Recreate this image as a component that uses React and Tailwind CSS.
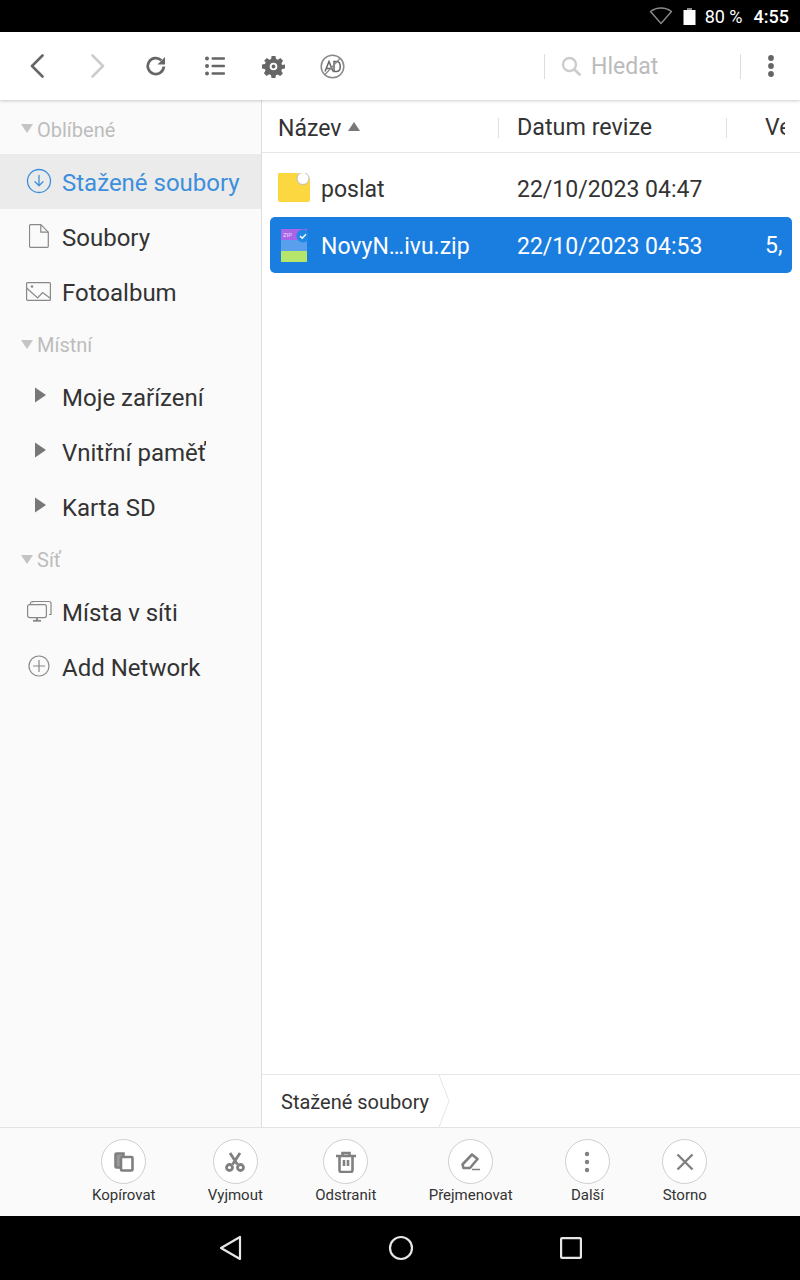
import React from 'react';

function Wifi() {
    return (
        <svg width="24" height="18" viewBox="0 0 24 18" fill="none">
            <path d="M1.500 4.500C4.500 2.200 8 1 12 1s7.500 1.200 10.500 3.500L12 16.500z" stroke="#8a8a8a" strokeWidth="1.400" strokeLinejoin="round" />
        </svg>
    );
}

function Battery() {
    return (
        <svg width="13" height="17" viewBox="0 0 13 17">
            <rect x="4" y="0" width="5" height="2" fill="#8a8a8a" />
            <rect x="0.500" y="2" width="12" height="15" fill="#fff" />
        </svg>
    );
}

function ToolIcon({ children }) {
    return <div className="w-[59px] flex items-center justify-center">{children}</div>;
}

function Toolbar() {
    return (
        <div className="h-[68px] bg-white flex items-center pl-[8px] shadow-[0_1px_3px_rgba(0,0,0,0.2)] relative z-10">
            <ToolIcon>
                <svg width="16" height="24" viewBox="0 0 16 24" fill="none" className="-ml-[2px]"><path d="M13.500 1.500 3 12l10.500 10.500" stroke="#666" strokeWidth="2.600" strokeLinecap="round" strokeLinejoin="round" /></svg>
            </ToolIcon>
            <ToolIcon>
                <svg width="16" height="24" viewBox="0 0 16 24" fill="none" className="ml-[2px]"><path d="M2.500 1.500 13 12 2.500 22.500" stroke="#ccc" strokeWidth="2.600" strokeLinecap="round" strokeLinejoin="round" /></svg>
            </ToolIcon>
            <ToolIcon>
                <svg width="22" height="22" viewBox="0 0 22 22" fill="none">
                    <path d="M18.800 11.500a8 8 0 1 1-2.500-6.200" stroke="#666" strokeWidth="2.700" />
                    <path d="M20 2v7.500h-7.500z" fill="#666" />
                </svg>
            </ToolIcon>
            <ToolIcon>
                <svg width="20" height="20" viewBox="0 0 20 20" fill="#666">
                    <circle cx="2" cy="2.500" r="2" /><circle cx="2" cy="10" r="2" /><circle cx="2" cy="17.500" r="2" />
                    <rect x="6.500" y="1.300" width="13.500" height="2.400" rx="1" /><rect x="6.500" y="8.800" width="13.500" height="2.400" rx="1" /><rect x="6.500" y="16.300" width="13.500" height="2.400" rx="1" />
                </svg>
            </ToolIcon>
            <ToolIcon>
                <svg width="23" height="23" viewBox="0 0 24 24" fill="#666">
                    <path fillRule="evenodd" d="M10 1h4l.7 3.100 1.800.8L19.200 3.200l2.800 2.800-1.700 2.700.8 1.800L24 10v4l-3.100.7-.8 1.800 1.700 2.700-2.800 2.800-2.700-1.700-1.800.8L14 24h-4l-.7-3.100-1.800-.8-2.700 1.700L2 19l1.700-2.700-.8-1.800L0 14v-4l3.100-.7.8-1.800L2.200 6 5 3.200l2.700 1.700 1.800-.8zM12 8a4 4 0 1 0 0 8 4 4 0 0 0 0-8z" />
                    <circle cx="12" cy="12" r="2" />
                </svg>
            </ToolIcon>
            <ToolIcon>
                <svg width="25" height="25" viewBox="0 0 25 25" fill="none">
                    <circle cx="12.500" cy="12.500" r="11.300" stroke="#888" strokeWidth="1.500" />
                    <path d="M5 17.500 9 7.500l4 10M6.500 14.500h5" stroke="#666" strokeWidth="1.500" />
                    <path d="M14 7.500v10h2.500c5 0 5-10 0-10z" stroke="#666" strokeWidth="1.500" />
                    <path d="M4.500 21 20.500 4" stroke="#888" strokeWidth="1.200" />
                </svg>
            </ToolIcon>
            <div className="ml-auto flex items-center">
                <div className="w-px h-[25px] bg-[#ddd]" />
                <div className="w-[195px] flex items-center pl-[16px] gap-[10px]">
                    <svg width="20" height="20" viewBox="0 0 20 20" fill="none">
                        <circle cx="8.500" cy="8.500" r="6.500" stroke="#ccc" strokeWidth="2.400" />
                        <path d="m13.500 13.500 5 5" stroke="#ccc" strokeWidth="2.800" strokeLinecap="round" />
                    </svg>
                    <span className="text-[23px] text-[#bbb] leading-none mt-[1px]">Hledat</span>
                </div>
                <div className="w-px h-[25px] bg-[#ddd]" />
                <div className="w-[59px] flex justify-center">
                    <svg width="8" height="24" viewBox="0 0 8 24" fill="#666"><circle cx="4" cy="4" r="2.900" /><circle cx="4" cy="12" r="2.900" /><circle cx="4" cy="20" r="2.900" /></svg>
                </div>
            </div>
        </div>
    );
}

const DownloadIcon = (
    <svg width="26" height="26" viewBox="0 0 26 26" fill="none" stroke="#3d8fdc" strokeWidth="1.300">
        <circle cx="13" cy="13" r="11.500" />
        <path d="M13 7.500v10M9 13.800l4 4 4-4" strokeLinecap="round" strokeLinejoin="round" />
    </svg>
);
const FileIcon = (
    <svg width="20" height="24" viewBox="0 0 20 24" fill="none" stroke="#888" strokeWidth="1.200">
        <path d="M1.500.7h10.300l7.500 7.500v14.100a1 1 0 0 1-1 1H1.500a1 1 0 0 1-1-1V1.700a1 1 0 0 1 1-1z" />
        <path d="M11.800.7v7.500h7.500" />
    </svg>
);
const PhotoIcon = (
    <svg width="25" height="19" viewBox="0 0 25 19" fill="none" stroke="#888" strokeWidth="1.200">
        <rect x="0.600" y="0.600" width="23.800" height="17.800" rx="1" />
        <path d="m.6 6 11 10 5-5.500 8 6" />
        <circle cx="6" cy="4.500" r="1.300" fill="#888" stroke="none" />
    </svg>
);
const MonitorIcon = (
    <svg width="25" height="22" viewBox="0 0 25 22" fill="none" stroke="#888" strokeWidth="1.200">
        <rect x="0.600" y="4.600" width="18.800" height="13" rx="2" />
        <path d="M3.500 4.500v-1a2 2 0 0 1 2-2h1M6 2.500V1.500h16a2 2 0 0 1 2 2v11h-2" />
        <path d="M6 20.800h8" strokeWidth="1.800" />
        <path d="M10 18v2" strokeWidth="2" />
    </svg>
);
const PlusIcon = (
    <svg width="22" height="22" viewBox="0 0 22 22" fill="none" stroke="#888" strokeWidth="1.200">
        <circle cx="11" cy="11" r="10" />
        <path d="M11 5v12M5 11h12" />
    </svg>
);
const Caret = (
    <svg width="12" height="16" viewBox="0 0 12 16" className="ml-[9px] -mt-[2px]"><path d="M0 0.500 11 8 0 15.500z" fill="#777" /></svg>
);

function SectionHeader({ label, className = '', textClass = '' }) {
    return (
        <div className={`flex items-center pl-[21px] gap-[4px] h-[50px] ${className}`}>
            <svg width="12" height="9" viewBox="0 0 12 9" className="-mt-[2px]"><path d="M0 0h12L6 9z" fill="#c4c4c4" /></svg>
            <span className={`text-[20px] text-[#bdbdbd] leading-none ${textClass}`}>{label}</span>
        </div>
    );
}

function SideRow({ icon, label, active, clip, first }) {
    return (
        <div className={`h-[55px] flex items-center ${active ? 'bg-[#ebebeb]' : ''}`}>
            <div className={`w-[62px] pl-[26px] flex items-center shrink-0 ${first ? '-mt-[1px]' : '-mt-[3px]'}`}>{icon}</div>
            <span className={`text-[24px] leading-none whitespace-nowrap ${first ? 'mt-[3px]' : 'mt-[1px]'} ${active ? 'text-[#3d8fdc]' : 'text-[#333]'} ${clip ? 'w-[144px] overflow-hidden py-[3px]' : ''}`}>{label}</span>
        </div>
    );
}

function Sidebar() {
    return (
        <div className="w-[262px] shrink-0 bg-[#fafafa] border-r border-[#dedede] flex flex-col">
            <SectionHeader label="Oblíbené" className="mt-[4px]" textClass="mt-[2px]" />
            <SideRow icon={DownloadIcon} label="Stažené soubory" active first />
            <SideRow icon={<span className="ml-[3px] flex">{FileIcon}</span>} label="Soubory" first />
            <SideRow icon={PhotoIcon} label="Fotoalbum" first />
            <SectionHeader label="Místní" className="mt-[1px]" />
            <SideRow icon={Caret} label="Moje zařízení" />
            <SideRow icon={Caret} label="Vnitřní paměť" clip />
            <SideRow icon={Caret} label="Karta SD" />
            <SectionHeader label="Síť" />
            <SideRow icon={<span className="ml-[1px] flex">{MonitorIcon}</span>} label="Místa v síti" />
            <SideRow icon={<span className="ml-[2px] flex">{PlusIcon}</span>} label="Add Network" />
        </div>
    );
}

function FolderIcon() {
    return (
        <svg width="32" height="29" viewBox="0 0 32 29">
            <path d="M1 0h19l5 5h6a1 1 0 0 1 1 1v21a2 2 0 0 1-2 2H2a2 2 0 0 1-2-2V1a1 1 0 0 1 1-1z" fill="#fdd73f" />
            <circle cx="25" cy="5.500" r="6" fill="#fff" stroke="#bdbdbd" strokeWidth="1" />
        </svg>
    );
}

function ZipIcon() {
    return (
        <svg width="30" height="33" viewBox="0 0 30 33">
            <rect x="3" y="0" width="26" height="11" fill="#a865e8" />
            <rect x="3" y="11" width="26" height="11" fill="#5a9fee" />
            <rect x="3" y="22" width="26" height="11" fill="#b5e56b" />
            <text x="5" y="8" fontSize="6" fill="#e8d5fb" fontFamily="Roboto, sans-serif">ZIP</text>
            <circle cx="25" cy="7" r="6.500" fill="#1e88e5" />
            <path d="m22 7 2.200 2.200 3.800-4" stroke="#fff" strokeWidth="1.400" fill="none" />
        </svg>
    );
}

function FileList() {
    return (
        <div className="flex-1 min-w-0 flex flex-col bg-white">
            <div className="h-[53px] flex items-center pt-[3px] border-b border-[#e6e6e6]">
                <div className="w-[237px] pl-[16px] flex items-center shrink-0 border-r border-[#e0e0e0] h-[20px]">
                    <div className="flex items-center gap-[7px]">
                        <span className="text-[23px] text-[#333] leading-none mt-[1px]">Název</span>
                        <svg width="12" height="9" viewBox="0 0 12 9" className="-mt-[2px]"><path d="M6 0l6 9H0z" fill="#777" /></svg>
                    </div>
                </div>
                <div className="w-[228px] pl-[18px] shrink-0 border-r border-[#e0e0e0] h-[20px] flex items-center">
                    <span className="text-[23.3px] text-[#333] leading-none mt-[1px]">Datum revize</span>
                </div>
                <div className="w-[58px] pl-[38px] overflow-hidden shrink-0 whitespace-nowrap">
                    <span className="text-[23px] text-[#333] leading-[28px] block">Velikost</span>
                </div>
            </div>
            <div className="pt-[8px] px-[8px]">
                <div className="h-[56px] flex items-center pl-[8px] text-[#333]">
                    <div className="w-[43px] shrink-0 -mt-[3px]"><FolderIcon /></div>
                    <span className="w-[196px] shrink-0 text-[23px] leading-none">poslat</span>
                    <span className="text-[23px] leading-none">22/10/2023 04:47</span>
                </div>
                <div className="h-[56px] flex items-center pl-[8px] text-white bg-[#1a7de0] rounded-[5px]">
                    <div className="w-[43px] shrink-0"><ZipIcon /></div>
                    <span className="w-[196px] shrink-0 text-[23px] leading-none mt-[2px]">NovyN…ivu.zip</span>
                    <span className="w-[248px] shrink-0 text-[23px] leading-none mt-[2px]">22/10/2023 04:53</span>
                    <span className="w-[18px] overflow-hidden text-[23px] leading-[28px] whitespace-nowrap mt-[2px]">5,3 MB</span>
                </div>
            </div>
            <div className="mt-auto h-[53px] border-t border-[#e6e6e6] flex items-center pl-[19px] gap-[9px]">
                <span className="text-[20px] text-[#333] leading-none mt-[2px]">Stažené soubory</span>
                <svg width="12" height="52" viewBox="0 0 12 52" fill="none"><path d="M1 0l10 26L1 52" stroke="#e6e6e6" strokeWidth="1" /></svg>
            </div>
        </div>
    );
}

function ActionButton({ label, children }) {
    return (
        <div className="flex flex-col items-center min-w-[45px]">
            <div className="w-[45px] h-[45px] rounded-full border border-[#cfcfcf] bg-white flex items-center justify-center">{children}</div>
            <span className="text-[15px] text-[#333] leading-none mt-[4px] whitespace-nowrap">{label}</span>
        </div>
    );
}

function ActionBar() {
    return (
        <div className="h-[89px] bg-[#fafafa] border-t border-[#e3e3e3] flex items-start pt-[11px] pl-[92px] gap-[52.3px]">
            <ActionButton label="Kopírovat">
                <svg width="20" height="20" viewBox="0 0 20 20" fill="none" stroke="#808080" strokeWidth="2.600">
                    <path d="M8 15.500H2.500a1 1 0 0 1-1-1V2.500a1 1 0 0 1 1-1h7v3" fill="#999" />
                    <rect x="7" y="5" width="11.500" height="13.500" rx="1" fill="#fff" />
                </svg>
            </ActionButton>
            <ActionButton label="Vyjmout">
                <svg width="20" height="20" viewBox="0 0 20 20" fill="none" stroke="#808080" strokeWidth="2.800">
                    <path d="M5 1l7.500 11.500M15 1 7.500 12.500" />
                    <circle cx="4.500" cy="15.500" r="3" /><circle cx="15.500" cy="15.500" r="3" />
                </svg>
            </ActionButton>
            <ActionButton label="Odstranit">
                <svg width="22" height="22" viewBox="0 0 22 22" fill="none" stroke="#808080" strokeWidth="2.600">
                    <path d="M1 5h20M4.500 5v14a2 2 0 0 0 2 2h9a2 2 0 0 0 2-2V5M7.500 5V2h7v3M9 9v6M13 9v6" />
                </svg>
            </ActionButton>
            <ActionButton label="Přejmenovat">
                <svg width="20" height="18" viewBox="0 0 20 18" fill="none" stroke="#808080" strokeWidth="2.600">
                    <path d="M11 1.500 16.500 6l-7.500 9H2.500L1.500 11.500z" strokeLinejoin="round" />
                    <path d="M11 16.500h8" strokeWidth="1.500" />
                </svg>
            </ActionButton>
            <ActionButton label="Další">
                <svg width="6" height="22" viewBox="0 0 6 22" fill="#808080"><circle cx="3" cy="3" r="2.200" /><circle cx="3" cy="11" r="2.200" /><circle cx="3" cy="19" r="2.200" /></svg>
            </ActionButton>
            <ActionButton label="Storno">
                <svg width="18" height="18" viewBox="0 0 18 18" fill="none" stroke="#808080" strokeWidth="2.400"><path d="M1.500 1.500l15 15M16.500 1.500l-15 15" /></svg>
            </ActionButton>
        </div>
    );
}

export default function App() {
    return (
        <div className="w-[800px] h-[1280px] flex flex-col overflow-hidden bg-white font-['Roboto',sans-serif]">
            <div className="h-[32px] bg-black shrink-0 flex items-center justify-end pr-[11px]">
                <Wifi />
                <div className="ml-[10px]"><Battery /></div>
                <span className="ml-[9px] text-[18px] text-white leading-none mt-[2px]">80 %</span>
                <span className="ml-[11px] text-[18px] font-medium text-white leading-none mt-[2px]">4:55</span>
            </div>
            <Toolbar />
            <div className="flex-1 min-h-0 flex">
                <Sidebar />
                <FileList />
            </div>
            <ActionBar />
            <div className="h-[64px] bg-black shrink-0 flex items-center justify-center">
                <div className="flex items-center">
                    <svg width="23" height="26" viewBox="0 0 23 26" fill="none" stroke="#e6e6e6" strokeWidth="2.200" strokeLinejoin="round"><path d="M21 2v22L2 13z" /></svg>
                    <svg width="26" height="26" viewBox="0 0 26 26" fill="none" stroke="#e6e6e6" strokeWidth="2.200" className="ml-[146px]"><circle cx="13" cy="13" r="11" /></svg>
                    <svg width="22" height="22" viewBox="0 0 22 22" fill="none" stroke="#e6e6e6" strokeWidth="2.200" strokeLinejoin="round" className="ml-[146px]"><rect x="1.100" y="1.100" width="19.800" height="19.800" rx="1" /></svg>
                </div>
            </div>
        </div>
    );
}
